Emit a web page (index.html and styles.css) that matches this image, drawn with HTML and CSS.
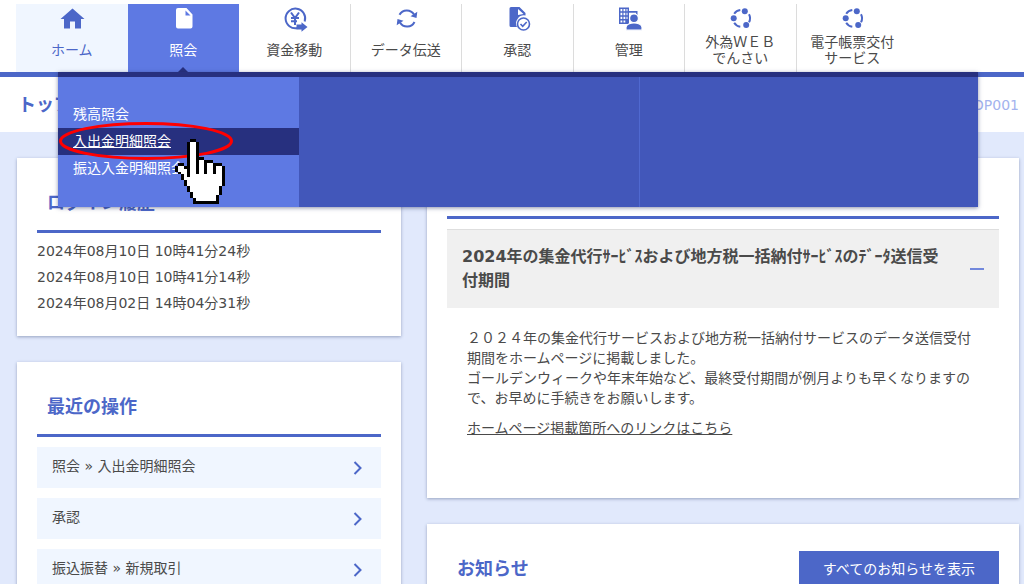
FILE: index.html
```html
<!DOCTYPE html>
<html lang="ja">
<head>
<meta charset="utf-8">
<title>トップページ</title>
<link rel="stylesheet" href="styles.css">
</head>
<body>
<header class="header">
  <nav class="nav" aria-label="メインメニュー">
    <a class="nav-item nav-home" href="#">
      <svg class="icon" viewBox="0 0 28 28"><path d="M12 24.500v-7h5v7h6v-9.500h3.500L14.500 4.500 2.500 15H6v9.500z"/></svg>
      <span class="nav-label">ホーム</span>
    </a>
    <a class="nav-item nav-current" href="#">
      <svg class="icon" viewBox="0 0 28 28"><path fill-rule="evenodd" d="M9 4h8.500l6 6.500V22.500a2 2 0 0 1-2 2H9a2 2 0 0 1-2-2V6a2 2 0 0 1 2-2zM16.500 6.500V11.500H21.500z"/></svg>
      <span class="nav-label">照会</span>
    </a>
    <a class="nav-item" href="#">
      <svg class="icon" viewBox="0 0 28 28"><path class="line" d="M24.700 17.500A9.800 9.800 0 1 0 17.500 24M11 8.500l4 5.500 4-5.500M15 13.500v7.500M11 14h8M11 17.200h6"/><path d="M16.500 20.500h5V18.300l6 4.700-6 4.700v-2.200h-5z"/></svg>
      <span class="nav-label">資金移動</span>
    </a>
    <a class="nav-item" href="#">
      <svg class="icon" viewBox="0 0 28 28"><path class="line" d="M7.500 10.800A8.300 8.300 0 0 1 22 10.500M22.500 18A8.300 8.300 0 0 1 8 18.500"/><path d="M25.300 7.800l-.8 6.200-6-1.800zM4.700 21.200l.8-6.200 6 1.800z"/></svg>
      <span class="nav-label">データ伝送</span>
    </a>
    <a class="nav-item" href="#">
      <svg class="icon" viewBox="0 0 28 28"><path fill-rule="evenodd" d="M8 3h8.500l6 6v2.500a8 8 0 0 0-8.500 11.500H8a1.500 1.500 0 0 1-1.500-1.500V4.500A1.500 1.500 0 0 1 8 3zM15 5v6l5.500-1z"/><circle class="thin" cx="20.500" cy="20" r="6"/><path class="thin" d="M17.500 20l2.200 2.300 4-4.300"/></svg>
      <span class="nav-label">承認</span>
    </a>
    <a class="nav-item" href="#">
      <svg class="icon" viewBox="0 0 28 28"><path fill-rule="evenodd" d="M4 3.500h10v3.500h8.500v4h-1.500V8.800h-7V20H4zM5.500 5v2.300h1.800V5zM8.500 5v2.300h1.800V5zM11.500 5v2.300h1V5zM5.500 8.800v2.400h1.800V8.800zM8.500 8.800v2.400h1.800V8.800zM11.500 8.800v2.400h1V8.800zM5.500 12.700v2.400h1.800v-2.400zM8.500 12.700v2.400h1.800v-2.400zM11.500 12.700v2.400h1v-2.400zM5.500 16.500v2h1.800v-2zM8.500 16.500v2h1.800v-2z"/><circle cx="19" cy="14.300" r="4.400" stroke="#fff" stroke-width="1.200"/><path d="M11 26.200v-3c0-2.800 4.500-4.300 8-4.300s8 1.500 8 4.300v3z" stroke="#fff" stroke-width="1.200"/></svg>
      <span class="nav-label">管理</span>
    </a>
    <a class="nav-item" href="#">
      <svg class="icon" viewBox="0 0 28 28"><path class="line" d="M8.200 9.800A8.600 8.600 0 0 1 14.300 6M23 10.200a8.600 8.600 0 0 1 0 8.100M14.300 22.700a8.600 8.600 0 0 1-6.100-4"/><circle cx="18.800" cy="7.300" r="3"/><circle cx="7.700" cy="14.300" r="3"/><circle cx="20.200" cy="21" r="3"/></svg>
      <span class="nav-label">外為ＷＥＢ<br>でんさい</span>
    </a>
    <a class="nav-item nav-last" href="#">
      <svg class="icon" viewBox="0 0 28 28"><path class="line" d="M8.200 9.800A8.600 8.600 0 0 1 14.300 6M23 10.200a8.600 8.600 0 0 1 0 8.100M14.300 22.700a8.600 8.600 0 0 1-6.100-4"/><circle cx="18.800" cy="7.300" r="3"/><circle cx="7.700" cy="14.300" r="3"/><circle cx="20.200" cy="21" r="3"/></svg>
      <span class="nav-label">電子帳票交付<br>サービス</span>
    </a>
  </nav>
  <div class="dropdown">
    <ul class="submenu">
      <li><a class="submenu-link" href="#">残高照会</a></li>
      <li><a class="submenu-link submenu-active" href="#">入出金明細照会</a></li>
      <li><a class="submenu-link" href="#">振込入金明細照会</a></li>
    </ul>
    <div class="dropdown-col"></div>
    <div class="dropdown-col dropdown-divided"></div>
    <svg class="highlight" viewBox="0 0 174 38"><ellipse cx="87" cy="19" rx="85.500" ry="17.500"/></svg>
    <svg class="pointer" viewBox="0 0 17 22" preserveAspectRatio="none" shape-rendering="crispEdges">
      <path d="M5 0H7V1H8V6H10V7H13V8H16V9H17V16H16V19H15V22H6V20H5V18H4V16H3V14H2V12H1V11H0V9H1V8H3V9H4V1H5Z"/>
      <path fill="#fff" d="M5 1h2v11h1V7h2v5h1V8h2v4h1V9h2v7h-1v3h-1v2H7v-1H6v-2H5v-2H4v-2H3v-2H2v-1H1V9h2v1h1v3h1z"/>
    </svg>
  </div>
</header>

<div class="titlebar">
  <h1 class="page-title">トップページ</h1>
  <span class="page-code">TOP001</span>
</div>

<main class="columns">
  <div class="column">
    <section class="card">
      <h2 class="card-title">ログイン履歴</h2>
      <ul class="history">
        <li>2024年08月10日 10時41分24秒</li>
        <li>2024年08月10日 10時41分14秒</li>
        <li>2024年08月02日 14時04分31秒</li>
      </ul>
    </section>
    <section class="card">
      <h2 class="card-title">最近の操作</h2>
      <div class="recent">
        <a class="recent-link" href="#">照会 » 入出金明細照会<svg class="chevron" viewBox="0 0 10 14"><path d="M1.500 1l6 6-6 6"/></svg></a>
        <a class="recent-link" href="#">承認<svg class="chevron" viewBox="0 0 10 14"><path d="M1.500 1l6 6-6 6"/></svg></a>
        <a class="recent-link" href="#">振込振替 » 新規取引<svg class="chevron" viewBox="0 0 10 14"><path d="M1.500 1l6 6-6 6"/></svg></a>
      </div>
    </section>
  </div>
  <div class="column">
    <section class="card card-notice">
      <button class="notice-toggle" type="button" aria-expanded="true">
        <span class="notice-title">2024年の集金代行ｻｰﾋﾞｽおよび地方税一括納付ｻｰﾋﾞｽのﾃﾞｰﾀ送信受付期間</span>
        <span class="minus"></span>
      </button>
      <div class="notice-body">
        <p>２０２４年の集金代行サービスおよび地方税一括納付サービスのデータ送信受付期間をホームページに掲載しました。<br>ゴールデンウィークや年末年始など、最終受付期間が例月よりも早くなりますので、お早めに手続きをお願いします。</p>
        <a class="notice-link" href="#">ホームページ掲載箇所へのリンクはこちら</a>
      </div>
    </section>
    <section class="card card-news">
      <h2 class="news-title">お知らせ</h2>
      <button class="news-button" type="button">すべてのお知らせを表示</button>
    </section>
  </div>
</main>
</body>
</html>
```

FILE: styles.css
```css
* {
  box-sizing: border-box;
}

body {
  margin: 0;
  height: 100vh;
  overflow: hidden;
  background: #e1e9fc;
  color: #4a4a4a;
  font: 14px/20px "DejaVu Sans", "Noto Sans CJK JP", sans-serif;
}

a {
  color: inherit;
  text-decoration: none;
}

ul {
  margin: 0;
  padding: 0;
  list-style: none;
}

h1,
h2,
p {
  margin: 0;
}

button {
  border: 0;
  font: inherit;
  cursor: pointer;
}

/* Header and main navigation */
.header {
  position: relative;
  padding: 4px 0 0 16px;
  background: #fff;
  border-bottom: 5px solid #4c67c8;
}

.nav {
  display: grid;
  grid-template-columns: repeat(8, 1fr);
  max-width: 892px;
}

.nav-item {
  position: relative;
  display: flex;
  flex-direction: column;
  align-items: center;
  height: 68px;
  border-right: 1px solid #dcdcdc;
}

.nav-home {
  background: #f0f6ff;
  color: #4c67c8;
  border-right: 0;
}

.nav-current {
  background: #5e79e3;
  color: #fff;
  border-right: 0;
}

.nav-current::after {
  content: "";
  position: absolute;
  bottom: 0;
  border: 5px solid transparent;
  border-top: 0;
  border-bottom-color: #27307f;
}

.nav-last {
  border-right: 0;
}

.nav-label {
  display: flex;
  flex: 1;
  align-items: center;
  padding-bottom: 4px;
  line-height: 16px;
  text-align: center;
}

.icon {
  width: 28px;
  height: 28px;
  fill: #4c67c8;
}

.nav-current .icon {
  fill: #fff;
}

.line,
.thin {
  fill: none;
  stroke: #4c67c8;
  stroke-width: 2;
}

.thin {
  stroke-width: 1.600;
}

/* Open submenu */
.dropdown {
  position: absolute;
  z-index: 1;
  top: 72px;
  left: 58px;
  right: 46px;
  display: grid;
  grid-template-columns: 241px 1fr 1fr;
  border-top: 5px solid #27307f;
  background: #4257ba;
  box-shadow: 0 1px 4px rgba(30, 40, 90, 0.5);
}

.submenu {
  padding: 24px 0 25px;
  background: #5e79e3;
}

.submenu-link {
  display: block;
  padding-left: 15px;
  color: #fff;
  line-height: 27px;
}

.submenu-active {
  background: #27307f;
  text-decoration: underline;
}

.dropdown-divided {
  border-left: 1px solid #5069d0;
}

.highlight {
  position: absolute;
  top: 45px;
  left: 1px;
  width: 174px;
  height: 38px;
  fill: none;
  stroke: #f00;
  stroke-width: 3;
}

.pointer {
  position: absolute;
  top: 62px;
  left: 117px;
  width: 50px;
  height: 65px;
}

/* Page title */
.titlebar {
  display: flex;
  align-items: center;
  justify-content: space-between;
  height: 55px;
  padding: 0 5px 0 18px;
  background: #fff;
}

.page-title,
.card-title,
.news-title {
  color: #4c67c8;
  font-size: 18px;
  line-height: 28px;
}

.page-code {
  color: #a3b3ee;
}

/* Content */
.columns {
  display: grid;
  grid-template-columns: 384fr 592fr;
  gap: 26px;
  padding: 26px 5px 0 17px;
}

.column {
  display: flex;
  flex-direction: column;
  gap: 26px;
}

.card {
  padding: 20px;
  background: #fff;
  box-shadow: 0 1px 3px rgba(60, 75, 120, 0.45);
}

.card-title {
  padding: 11px 10px 13px;
  border-bottom: 3px solid #4c67c8;
}

.history {
  padding-top: 5px;
  line-height: 26px;
}

.recent {
  display: grid;
  gap: 10px;
  padding-top: 10px;
}

.recent-link {
  display: flex;
  align-items: center;
  justify-content: space-between;
  height: 41px;
  padding: 0 18px 4px 15px;
  background: #f0f6ff;
}

.chevron {
  width: 10px;
  height: 14px;
  margin-top: 4px;
  fill: none;
  stroke: #4c67c8;
  stroke-width: 2;
}

.card-notice {
  padding: 58px 20px 60px;
}

.notice-toggle {
  display: flex;
  align-items: center;
  justify-content: space-between;
  width: 100%;
  padding: 15px;
  background: #f0f0f0;
  color: #4a4a4a;
  border-top: 1px solid #dedede;
  text-align: left;
}

.card-notice::before {
  content: "";
  display: block;
  height: 3px;
  margin-bottom: 10px;
  background: #4c67c8;
}

.notice-title {
  max-width: 488px;
  font-size: 16px;
  font-weight: bold;
  line-height: 24px;
}

.minus {
  width: 14px;
  height: 2px;
  background: #7288dc;
}

.notice-body {
  padding: 20px 20px 0;
}

.notice-link {
  display: inline-block;
  margin-top: 10px;
  text-decoration: underline;
}

.card-news {
  display: flex;
  align-items: center;
  justify-content: space-between;
  padding: 27px 20px 20px 30px;
}

.news-button {
  padding: 8px 24px;
  background: #4c67c8;
  color: #fff;
}
```
